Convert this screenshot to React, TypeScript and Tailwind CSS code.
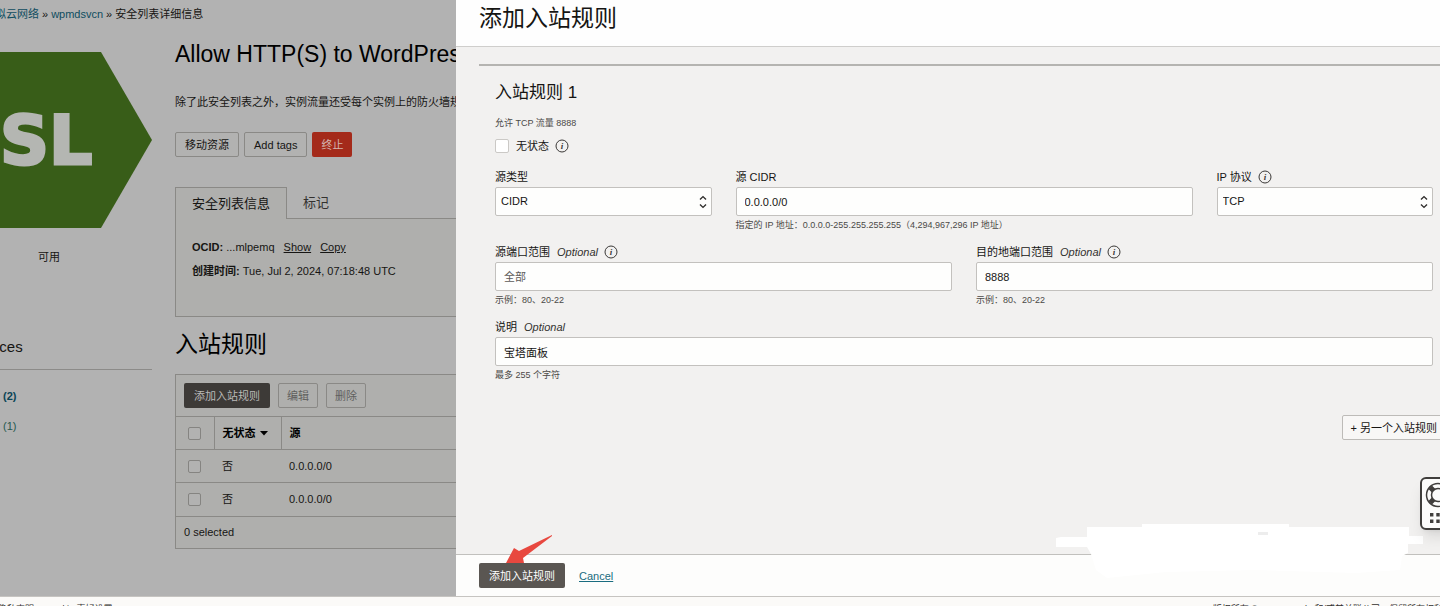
import React, { useState } from 'react';

const secondaryButton =
  'h-[25px] px-[9px] rounded-xs border border-[#8a8986] bg-[#b2b2b1] text-[11px] leading-4 text-[#161513] whitespace-nowrap';

const fieldBox =
  'w-full h-[29px] rounded-xs border border-[#c3c1be] bg-[#fefefd] text-[11px] text-[#161513] outline-none';

function InfoIcon() {
  return (
    <svg width="14" height="14" viewBox="0 0 14 14" aria-hidden="true">
      <circle cx="7" cy="7" r="6" fill="none" stroke="#3a3836" strokeWidth="1" />
      <text
        x="7"
        y="10"
        textAnchor="middle"
        fontSize="9"
        fontStyle="italic"
        fontWeight="bold"
        fill="#3a3836"
        className="font-['Liberation_Serif',serif]"
      >
        i
      </text>
    </svg>
  );
}

function Arrows() {
  return (
    <svg
      width="8"
      height="14"
      viewBox="0 0 8 14"
      className="absolute right-[5px] top-2 pointer-events-none"
      fill="none"
      stroke="#2f2d2b"
      strokeWidth="1.4"
      aria-hidden="true"
    >
      <path d="M1 4.5 4 1.6 7 4.5M1 9.5 4 12.4 7 9.5" />
    </svg>
  );
}

type FieldProps = {
  id: string;
  label: string;
  optional?: boolean;
  info?: boolean;
  hint?: string;
  className?: string;
  children: React.ReactNode;
};

function Field({ id, label, optional, info, hint, className = '', children }: FieldProps) {
  return (
    <div className={className}>
      <div className="flex items-center h-4 mb-0.5 gap-1.5 text-[11px] leading-4">
        <label htmlFor={id} className="flex gap-[7px]">
          {label}
          {optional && <em className="text-[#33312f]">Optional</em>}
        </label>
        {info && <InfoIcon />}
      </div>
      <div className="relative">{children}</div>
      {hint && <p className="mt-[3px] text-[9px] leading-3 text-[#4b4947]">{hint}</p>}
    </div>
  );
}

function Sidebar() {
  return (
    <aside className="w-[152px] shrink-0">
      <svg width="152" height="176" viewBox="0 0 152 176" className="mt-[14px]">
        <path d="M0 0H101L152 88 101 176H0Z" fill="#385d18" />
        <text
          x="0"
          y="112"
          fontSize="68"
          fontWeight="bold"
          fill="#b4b6b2"
          stroke="#b4b6b2"
          strokeWidth="3"
          className="font-['DejaVu_Sans',sans-serif]"
        >
          SL
        </text>
      </svg>
      <p className="mt-[21px] pl-[38px] text-[11px] leading-4">可用</p>
      <h2 className="mt-[72px] -ml-[49px] pb-3 border-b border-[#8c8b89] text-[15px] leading-5">Resources</h2>
      <nav className="mt-[18px] -ml-[44px] flex flex-col gap-[14px] text-[11px] leading-4 text-[#0b4557]">
        <a href="#ingress" className="font-bold">入站规则 (2)</a>
        <a href="#egress" className="text-[#27594f]">出站规则 (1)</a>
      </nav>
    </aside>
  );
}

const rules = [
  { stateless: '否', source: '0.0.0.0/0' },
  { stateless: '否', source: '0.0.0.0/0' },
];

const rowCheck = 'block appearance-none size-[13px] rounded-xs border border-[#858481] bg-[#b2b2b1]';

function RulesTable() {
  return (
    <div className="mt-[14px] border border-r-0 border-[#8a8986] bg-[#afafad]">
      <div className="flex gap-2 px-2 py-2">
        <button className="h-[25px] px-[10px] rounded-xs bg-[#3d3a37] text-[11px] leading-4 text-[#bab9b7]">
          添加入站规则
        </button>
        <button className="h-[25px] px-2 rounded-xs border border-[#8a8986] text-[11px] leading-4 text-[#605f5d]" disabled>
          编辑
        </button>
        <button className="h-[25px] px-2 rounded-xs border border-[#8a8986] text-[11px] leading-4 text-[#605f5d]" disabled>
          删除
        </button>
      </div>
      <table className="w-full table-fixed text-[11px] leading-4 text-left">
        <thead>
          <tr className="h-[33px] border-t border-[#8a8986] text-black">
            <th className="w-[38px] pl-3 border-r border-[#8a8986]">
              <input type="checkbox" aria-label="Select all" className={rowCheck} />
            </th>
            <th className="w-[67px] pl-2 border-r border-[#8a8986]">
              <span className="flex items-center gap-1">
                无状态
                <svg width="8" height="5" viewBox="0 0 8 5" aria-hidden="true">
                  <path d="M0 0h8L4 4.5Z" />
                </svg>
              </span>
            </th>
            <th className="pl-2">源</th>
          </tr>
        </thead>
        <tbody>
          {rules.map((rule, i) => (
            <tr key={i} className="h-[33px] border-t border-[#8a8986]">
              <td className="pl-3">
                <input type="checkbox" aria-label={rule.source} className={rowCheck} />
              </td>
              <td className="pl-2">{rule.stateless}</td>
              <td className="pl-2">{rule.source}</td>
            </tr>
          ))}
        </tbody>
      </table>
      <p className="px-2 pt-[7px] pb-2 border-t border-[#8a8986] text-[11px] leading-4">0 selected</p>
    </div>
  );
}

function DetailsPage() {
  return (
    <div className="w-[456px] shrink-0 overflow-hidden bg-[#b2b2b2] text-[#161513] whitespace-nowrap">
      <nav className="-ml-[16px] pt-1.5 flex gap-[3px] text-[11px] leading-4">
        <a href="#vcn" className="text-[#0f4d60]">虚拟云网络</a>
        <span>»</span>
        <a href="#wpmdsvcn" className="text-[#0f4d60]">wpmdsvcn</a>
        <span>»</span>
        <span>安全列表详细信息</span>
      </nav>
      <div className="mt-4 flex gap-[23px]">
        <Sidebar />
        <main className="flex-1 min-w-0">
          <h1 className="text-[23px] leading-8 text-black">Allow HTTP(S) to WordPress</h1>
          <p className="mt-6 text-[11px] leading-4">除了此安全列表之外，实例流量还受每个实例上的防火墙规则控制。</p>
          <div className="mt-[22px] flex gap-[5px]">
            <button className={secondaryButton}>移动资源</button>
            <button className={secondaryButton}>Add tags</button>
            <button className="h-[25px] px-[9px] rounded-xs bg-[#a42a1a] text-[11px] leading-4 text-[#d3b5b0]">终止</button>
          </div>
          <div className="mt-[30px] flex text-[13px] leading-5" role="tablist">
            <button role="tab" aria-selected="true" className="w-[112px] h-8 border border-b-0 border-[#8a8986] bg-[#afafad]">
              安全列表信息
            </button>
            <button role="tab" aria-selected="false" className="flex-1 h-8 pl-4 text-left border-b border-[#8a8986] text-[#33312f]">
              标记
            </button>
          </div>
          <div className="pt-5 pl-4 pb-[37px] border-l border-b border-[#8a8986] bg-[#afafad] text-[11px] leading-4">
            <p>
              <b>OCID:</b> ...mlpemq <a href="#show" className="ml-1.5 underline">Show</a>{' '}
              <a href="#copy" className="ml-1.5 underline">Copy</a>
            </p>
            <p className="mt-2">
              <b>创建时间:</b> Tue, Jul 2, 2024, 07:18:48 UTC
            </p>
          </div>
          <h2 className="mt-[11px] text-[23px] leading-8 text-black">入站规则</h2>
          <RulesTable />
        </main>
      </div>
    </div>
  );
}

function IngressForm() {
  const [stateless, setStateless] = useState(false);

  return (
    <div className="ml-[23px] mt-[17px] pt-[15px] pl-4 pr-[7px] border-t-2 border-[#b5b4b1]">
      <h3 className="text-[17px] leading-6">入站规则 1</h3>
      <p className="mt-3 text-[9px] leading-3 text-[#4b4947]">允许 TCP 流量 8888</p>
      <div className="mt-[9px] flex items-center h-4 text-[11px] leading-4">
        <input
          id="stateless"
          type="checkbox"
          checked={stateless}
          onChange={(e) => setStateless(e.target.checked)}
          className="appearance-none size-[14px] rounded-xs border border-[#cbc9c6] bg-white checked:bg-[#3d3a37]"
        />
        <label htmlFor="stateless" className="ml-[7px] mr-1.5">无状态</label>
        <InfoIcon />
      </div>
      <div className="mt-[15px] grid grid-cols-4 gap-x-6 gap-y-[13px]">
        <Field id="source-type" label="源类型">
          <select id="source-type" className={`${fieldBox} appearance-none px-[5px]`}>
            <option>CIDR</option>
          </select>
          <Arrows />
        </Field>
        <Field id="source-cidr" label="源 CIDR" hint="指定的 IP 地址：0.0.0.0-255.255.255.255（4,294,967,296 IP 地址）" className="col-span-2">
          <input id="source-cidr" type="text" defaultValue="0.0.0.0/0" className={`${fieldBox} px-2`} />
        </Field>
        <Field id="protocol" label="IP 协议" info>
          <select id="protocol" className={`${fieldBox} appearance-none px-[5px]`}>
            <option>TCP</option>
          </select>
          <Arrows />
        </Field>
        <Field id="source-port" label="源端口范围" optional info hint="示例：80、20-22" className="col-span-2">
          <input id="source-port" type="text" placeholder="全部" className={`${fieldBox} px-2 placeholder:text-[#5c5a58]`} />
        </Field>
        <Field id="dest-port" label="目的地端口范围" optional info hint="示例：80、20-22" className="col-span-2">
          <input id="dest-port" type="text" defaultValue="8888" className={`${fieldBox} px-2`} />
        </Field>
        <Field id="description" label="说明" optional hint="最多 255 个字符" className="col-span-4">
          <input id="description" type="text" defaultValue="宝塔面板" className={`${fieldBox} px-2`} />
        </Field>
      </div>
      <div className="mt-[34px] -mr-4 flex justify-end">
        <button className="h-[25px] pl-2 pr-[11px] rounded-xs border border-[#bdbbb8] bg-[#f8f7f6] text-[11px] leading-4 whitespace-nowrap">
          + 另一个入站规则
        </button>
      </div>
    </div>
  );
}

function HelpWidget() {
  return (
    <button
      aria-label="Help"
      className="absolute -right-4 bottom-[66px] w-9 h-[53px] rounded-md border-2 border-[#403e3c] bg-[#fcfcfb] shadow-lg"
    >
      <svg width="32" height="49" viewBox="0 0 32 49" fill="none" aria-hidden="true">
        <circle cx="16" cy="16" r="11.5" stroke="#403e3c" strokeWidth="1.5" />
        <circle cx="16" cy="16" r="6.5" stroke="#403e3c" strokeWidth="1.5" />
        <path
          d="m8.2 8.2 3.2 3.2M23.8 8.2l-3.2 3.2M8.2 23.8l3.2-3.2M23.8 23.8l-3.2-3.2"
          stroke="#403e3c"
          strokeWidth="5"
        />
        <path
          d="M8 34h3.4v3.400H8zM14.300 34h3.400v3.400h-3.400zM20.600 34H24v3.400h-3.400zM8 40.500h3.400v3.400H8zM14.300 40.500h3.400v3.400h-3.400zM20.600 40.500H24v3.400h-3.400z"
          fill="#403e3c"
        />
      </svg>
    </button>
  );
}

function AddRulesPanel() {
  return (
    <section className="relative flex-1 min-w-0 flex flex-col bg-[#f2f1f0] text-[#161513]">
      <header className="pl-[23px] pb-[10px] border-b border-[#cfcecc] bg-[#fefefe]">
        <h2 className="text-[23px] leading-9">添加入站规则</h2>
      </header>
      <div className="flex-1 min-h-0">
        <IngressForm />
      </div>
      <footer className="flex items-center gap-[14px] pl-[23px] py-2 border-t border-[#c1c0bd] bg-[#fdfdfc] text-[11px] leading-4">
        <button className="h-[25px] px-[10px] rounded-xs bg-[#5a5652] text-white">添加入站规则</button>
        <a href="#cancel" className="text-[#1a6c80] underline">Cancel</a>
      </footer>

      {/* erased strip over the footer edge */}
      <svg width="367" height="55" viewBox="0 0 367 55" className="absolute right-[17px] bottom-[17px]" aria-hidden="true">
        <path
          d="M0 14 5 13H31V3H86V0H233V3H353V12H367V20H352V29L346 32 344 46 300 49 200 46 110 48 51 54 40 46 35 30 31 23H0Z"
          fill="#fff"
        />
        <path d="M202 8h10v3h-10z" fill="#ededed" />
      </svg>
      <svg width="48" height="32" viewBox="0 0 48 32" className="absolute left-[49px] bottom-[31px]" aria-hidden="true">
        <path d="M47 2 14 18 9 15 1 30 19 30 18 25 47 3Z" fill="#e8483f" />
      </svg>
      <HelpWidget />
    </section>
  );
}

function App() {
  return (
    <div className="h-screen flex flex-col overflow-hidden font-['Liberation_Sans','Noto_Sans_CJK_SC',sans-serif]">
      <div className="relative flex-1 min-h-0 flex overflow-hidden">
        <DetailsPage />
        <AddRulesPanel />
      </div>
      <footer className="h-[10px] shrink-0 overflow-hidden flex justify-between border-t border-[#c6c4c1] bg-[#fbfaf8] pt-1.5 text-[9px] leading-3 text-[#33312f] whitespace-nowrap">
        <div className="-ml-[47px] flex gap-3">
          <a href="#terms">使用条款和隐私声明</a>
          <a href="#cookies">Cookie 喜好设置</a>
        </div>
        <p className="-mr-3">版权所有 © 2024, Oracle 和/或其关联公司。保留所有权利。</p>
      </footer>
    </div>
  );
}

export default App;
